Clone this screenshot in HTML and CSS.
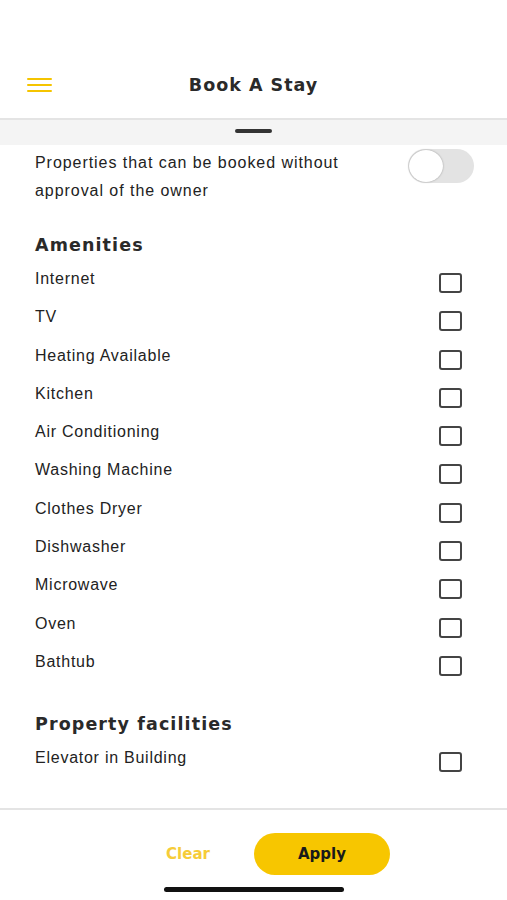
FILE: index.html
```html
<!DOCTYPE html>
<html>
<head>
<meta charset="utf-8">
<link rel="stylesheet" href="styles.css">
</head>
<body>
<div class="screen">
  <header class="topbar">
    <div class="menu"><span></span><span></span><span></span></div>
    <h1 class="title">Book A Stay</h1>
  </header>
  <div class="grabber"><div class="handle"></div></div>
  <main class="content">
    <div class="toggle-row">
      <p class="toggle-text">Properties that can be booked without approval of the owner</p>
      <div class="switch"><div class="knob"></div></div>
    </div>
    <h2 class="section">Amenities</h2>
    <ul class="list">
      <li class="item"><span>Internet</span><i class="box"></i></li>
      <li class="item"><span>TV</span><i class="box"></i></li>
      <li class="item"><span>Heating Available</span><i class="box"></i></li>
      <li class="item"><span>Kitchen</span><i class="box"></i></li>
      <li class="item"><span>Air Conditioning</span><i class="box"></i></li>
      <li class="item"><span>Washing Machine</span><i class="box"></i></li>
      <li class="item"><span>Clothes Dryer</span><i class="box"></i></li>
      <li class="item"><span>Dishwasher</span><i class="box"></i></li>
      <li class="item"><span>Microwave</span><i class="box"></i></li>
      <li class="item"><span>Oven</span><i class="box"></i></li>
      <li class="item"><span>Bathtub</span><i class="box"></i></li>
    </ul>
    <h2 class="section section2">Property facilities</h2>
    <ul class="list">
      <li class="item"><span>Elevator in Building</span><i class="box"></i></li>
    </ul>
  </main>
  <footer class="footer">
    <div class="actions">
      <button class="clear">Clear</button>
      <button class="apply">Apply</button>
    </div>
    <div class="home"></div>
  </footer>
</div>
</body>
</html>
```
FILE: styles.css
```css
* { box-sizing: border-box; }
html, body { margin: 0; padding: 0; background: #fff; }
body { font-family: "Liberation Sans", Arial, sans-serif; color: #222; }
.screen { width: 507px; height: 900px; display: flex; flex-direction: column; }
.topbar { height: 120px; display: flex; align-items: flex-end; justify-content: center; position: relative; padding-bottom: 21px; border-bottom: 2px solid #e4e4e4; }
.menu { position: absolute; left: 27px; top: 78px; width: 25px; display: flex; flex-direction: column; gap: 4px; }
.menu span { display: block; height: 2px; background: #f5c400; border-radius: 1px; }
.title { margin: 0; font-family: "DejaVu Sans", sans-serif; font-weight: 700; font-size: 17.5px; color: #2a2a2a; letter-spacing: 1px; line-height: 24px; }
.grabber { height: 25px; background: #f4f4f4; display: flex; justify-content: center; padding-top: 9px; }
.handle { width: 37px; height: 4px; border-radius: 2px; background: #333; }
.content { flex: 1; padding: 0 34px 0 35px; }
.toggle-row { display: flex; justify-content: space-between; align-items: flex-start; padding-top: 4px; }
.toggle-text { margin: 0; width: 330px; font-size: 16px; letter-spacing: 0.95px; line-height: 28px; color: #222; }
.switch { width: 66px; height: 34px; border-radius: 17px; background: #e3e3e3; margin-top: 0; margin-right: -1px; position: relative; }
.knob { position: absolute; left: 1px; top: 1px; width: 34px; height: 32px; border-radius: 50%; background: #fff; box-shadow: 0 0 2px rgba(0,0,0,0.35); }
.section { margin: 28px 0 0; font-family: "DejaVu Sans", sans-serif; font-weight: 700; font-size: 17.5px; letter-spacing: 1.1px; line-height: 24px; color: #2a2a2a; }
.section2 { margin-top: 23px; }
.list { list-style: none; margin: 0; padding: 0; margin-top: 11px; }
.item { height: 38.3px; display: flex; justify-content: space-between; align-items: flex-start; font-size: 16px; letter-spacing: 0.75px; color: #222; }
.item span { line-height: 22px; padding-top: 0; }
.box { display: block; width: 23px; height: 20px; border: 2px solid #444; border-radius: 3px; margin-top: 5px; margin-right: 11px; }
.footer { height: 92px; border-top: 2px solid #e4e4e4; display: flex; flex-direction: column; align-items: center; }
.actions { display: flex; align-items: center; gap: 44px; margin-top: 23px; margin-left: 49px; }
button { font: inherit; border: 0; background: none; padding: 0; cursor: pointer; }
.clear { font-family: "DejaVu Sans", sans-serif; font-weight: 700; font-size: 15px; color: #f6cc38; }
.apply { width: 136px; height: 42px; border-radius: 21px; background: #f7c600; font-family: "DejaVu Sans", sans-serif; font-weight: 700; font-size: 15px; color: #1a1a1a; }
.home { width: 180px; height: 5px; border-radius: 3px; background: #111; margin-top: 12px; margin-left: 1px; }
```
